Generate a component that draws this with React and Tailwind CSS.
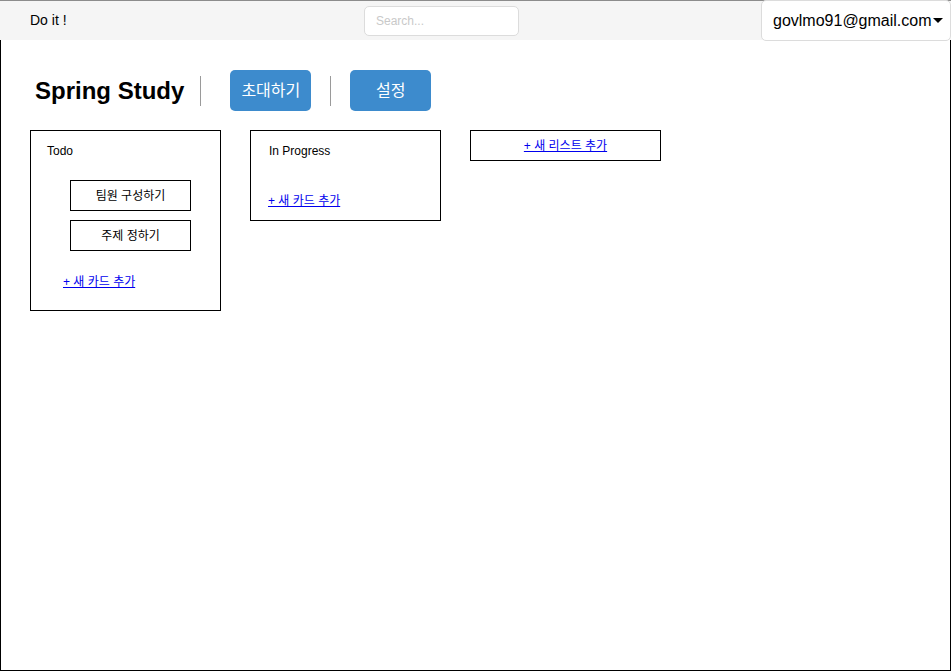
import React from 'react';

const font = { fontFamily: '"Liberation Sans", "Noto Sans CJK KR", Arial, sans-serif' };

function AddLink({ children, className = '' }) {
  return (
    <a href="#" className={`text-[12px] text-[#0000ee] underline ${className}`}>
      {children}
    </a>
  );
}

function Card({ title }) {
  return (
    <div className="w-[121px] h-[31px] border border-black flex items-center justify-center text-[12px] text-black">
      {title}
    </div>
  );
}

export default function App() {
  return (
    <div className="w-[951px] h-[671px] flex flex-col bg-white text-black" style={font}>
      <header className="relative h-[40px] shrink-0 bg-[#f5f5f5] border-t border-[#8c8c8c] flex items-center">
        <div className="w-[364px] pl-[30px] text-[14px]">Do it !</div>
        <input
          type="text"
          placeholder="Search..."
          className="w-[155px] h-[30px] rounded-[5px] border border-[#dcdcdc] bg-white px-[11px] text-[12px] outline-none placeholder:text-[#c9c9c9]"
        />
        <div className="absolute right-0 top-[-1px] h-[41px] w-[190px] bg-white border border-[#dcdcdc] rounded-[5px] flex items-center pl-[11px] text-[16px] z-10">
          govlmo91@gmail.com
          <span className="ml-[1px] inline-block w-0 h-0 border-l-[5px] border-r-[5px] border-t-[5px] border-l-transparent border-r-transparent border-t-black"></span>
        </div>
      </header>

      <main className="flex-1 border-l border-r border-b border-black">
        <div className="flex items-center mt-[30px] h-[41px]">
          <h1 className="ml-[34px] text-[24px] font-bold leading-none">Spring Study</h1>
          <div className="ml-[16px] w-px h-[30px] bg-[#9a9a9a]"></div>
          <button className="ml-[29px] w-[81px] h-[41px] rounded-[5px] bg-[#3d8bcd] text-white text-[16px]">
            초대하기
          </button>
          <div className="ml-[19px] w-px h-[30px] bg-[#9a9a9a]"></div>
          <button className="ml-[19px] w-[81px] h-[41px] rounded-[5px] bg-[#3d8bcd] text-white text-[16px]">
            설정
          </button>
        </div>

        <div className="flex items-start gap-[29px] mt-[19px] ml-[29px]">
          <section className="w-[191px] h-[181px] border border-black">
            <div className="pl-[16px] pt-[11px] text-[12px]">Todo</div>
            <div className="mt-[20px] ml-[39px] flex flex-col gap-[9px]">
              <Card title="팀원 구성하기" />
              <Card title="주제 정하기" />
            </div>
            <div className="mt-[18px] ml-[32px]">
              <AddLink>+ 새 카드 추가</AddLink>
            </div>
          </section>

          <section className="w-[191px] h-[91px] border border-black">
            <div className="pl-[18px] pt-[11px] text-[12px]">In Progress</div>
            <div className="mt-[28px] ml-[17px]">
              <AddLink>+ 새 카드 추가</AddLink>
            </div>
          </section>

          <section className="w-[191px] h-[31px] border border-black flex items-center justify-center">
            <AddLink>+ 새 리스트 추가</AddLink>
          </section>
        </div>
      </main>
    </div>
  );
}
